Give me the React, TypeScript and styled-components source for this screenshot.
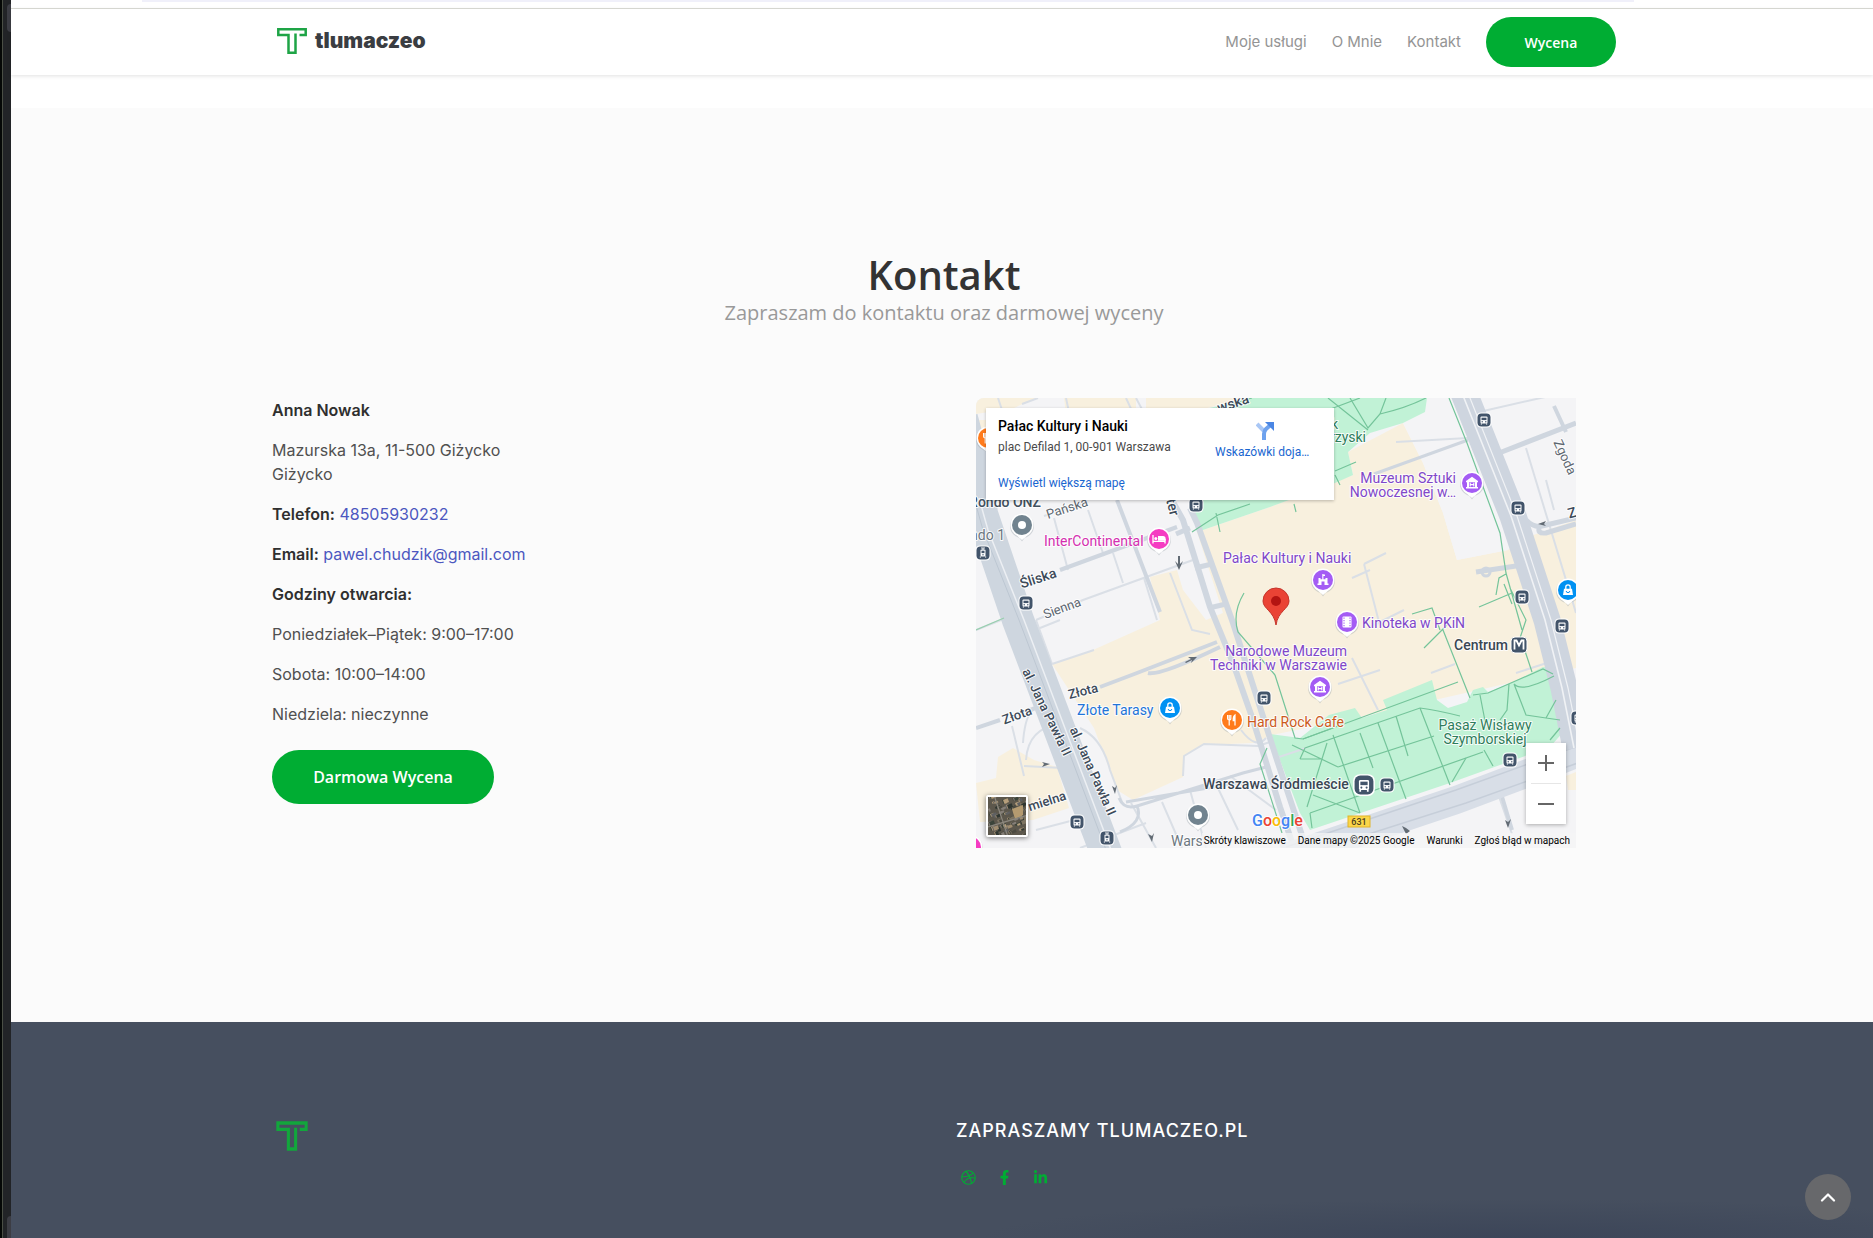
import React from "react";
import styled, { createGlobalStyle } from "styled-components";
import { FaDribbble, FaFacebookF, FaLinkedinIn } from "react-icons/fa";

const GREEN = "#00ad33";
const SANS = `Inter, "Liberation Sans", sans-serif`;
const DISPLAY = `"Open Sans", "Noto Sans", sans-serif`;
const MAP_FONT = `Roboto, "Liberation Sans", sans-serif`;

const Global = createGlobalStyle`
  *, *::before, *::after { box-sizing: border-box; }
  body { margin: 0; background: #fff; font-family: ${SANS}; }
  h1, h2, h3, p, ul { margin: 0; padding: 0; }
  a { text-decoration: none; color: inherit; }
`;

/* ---------- frame ---------- */

const Shell = styled.div`
  display: flex;
  min-height: 100vh;
`;

const Rail = styled.div`
  flex: 0 0 11px;
  display: flex;
  flex-direction: column;
  justify-content: space-between;
  align-items: flex-end;
  padding: 4px 0 0;
  background: linear-gradient(90deg, #050806 2px, #4a4f45 2px, #4a4f45 3px, #222427 3px);
`;

const RailCorner = styled.span<{ $bottom?: boolean }>`
  width: 4px;
  height: ${(p) => (p.$bottom ? 22 : 28)}px;
  background: #3c3d44;
  border-radius: ${(p) => (p.$bottom ? "4px 0 0 0" : "4px 0 0 4px")};
`;

const Page = styled.div`
  flex: 1;
  min-width: 0;
  display: flex;
  flex-direction: column;
`;

const TopStrip = styled.div`
  height: 9px;
  padding: 0 239px 0 131px;
  border-bottom: 1px solid #dcddd6;
  &::before {
    content: "";
    display: block;
    height: 2px;
    background: #f0f0fa;
  }
`;

const Container = styled.div`
  width: 100%;
  max-width: 1348px;
  margin: 0 auto;
  padding-left: 4px;
`;

/* ---------- header ---------- */

const Header = styled.header`
  background: #fff;
  box-shadow: 0 1px 4px rgba(0, 0, 0, 0.12);
`;

const HeaderRow = styled(Container)`
  display: flex;
  align-items: center;
  justify-content: space-between;
  height: 66px;
`;

const Brand = styled.a`
  display: flex;
  align-items: center;
  gap: 8px;
  padding: 0 0 2px 5px;
  color: #3a3d42;
  font-size: 21px;
  line-height: 24px;
  font-weight: 900;
`;

const Nav = styled.nav`
  display: flex;
  align-items: center;
  gap: 25px;
`;

const NavLink = styled.a`
  color: #949494;
  font-size: 15px;
  line-height: 24px;
`;

const Pill = styled.button<{ $large?: boolean }>`
  width: ${(p) => (p.$large ? 222 : 130)}px;
  height: ${(p) => (p.$large ? 54 : 50)}px;
  border: 0;
  border-radius: 27px;
  background: ${GREEN};
  color: #fff;
  font-family: ${DISPLAY};
  font-size: ${(p) => (p.$large ? 16 : 14)}px;
  font-weight: 600;
  cursor: pointer;
`;

/* ---------- contact ---------- */

const Contact = styled.section`
  margin-top: 33px;
  padding: 143px 0 174px;
  background: #fbfbfb;
`;

const Title = styled.h2`
  color: #333;
  font-family: ${DISPLAY};
  font-size: 40px;
  line-height: 48px;
  font-weight: 600;
  text-align: center;
`;

const Subtitle = styled.p`
  margin-bottom: 71px;
  color: #999;
  font-family: ${DISPLAY};
  font-size: 20px;
  line-height: 28px;
  text-align: center;
`;

const Columns = styled.div`
  display: grid;
  grid-template-columns: 1fr 1fr;
  column-gap: 24px;
  align-items: start;
`;

const Details = styled.div`
  color: #505050;
  font-size: 16px;
  line-height: 24px;
`;

const Line = styled.p`
  margin-bottom: 16px;
  strong { color: #2f2f2f; font-weight: 600; }
  a { color: #4c57c0; }
  &:last-of-type { margin-bottom: 24px; }
`;

/* ---------- map ---------- */

const MapFrame = styled.div`
  position: relative;
  height: 450px;
  max-width: 600px;
  margin-left: 20px;
  width: 100%;
  overflow: hidden;
  border-radius: 8px 0 0 0;
  font-family: ${MAP_FONT};
  background: #f3f3f5;
  > svg { display: block; }
`;

const PlaceCard = styled.div`
  position: absolute;
  top: 10px;
  left: 10px;
  width: 348px;
  height: 92px;
  display: flex;
  justify-content: space-between;
  padding: 10px 19px 6px 12px;
  background: #fff;
  box-shadow: 0 1px 3px rgba(0, 0, 0, 0.25);
`;

const PlaceInfo = styled.div`
  display: flex;
  flex-direction: column;
  color: #4a4a4a;
  font-size: 12px;
  line-height: 16px;
  h3 { color: #000; font-size: 14px; line-height: 16px; font-weight: 500; margin-bottom: 5px; }
  a { color: #1a66d0; margin-top: 20px; }
`;

const Directions = styled.a`
  display: flex;
  flex-direction: column;
  align-items: center;
  gap: 4px;
  width: 100px;
  padding-top: 4px;
  color: #1a66d0;
  font-size: 12px;
  line-height: 16px;
  span { align-self: flex-start; }
`;

const ZoomControl = styled.div`
  position: absolute;
  right: 10px;
  top: 345px;
  display: flex;
  flex-direction: column;
  align-items: center;
  background: #fff;
  box-shadow: 0 1px 4px rgba(0, 0, 0, 0.3);
  button {
    width: 40px;
    height: 40px;
    padding: 0;
    border: 0;
    background: none;
    display: grid;
    place-items: center;
    cursor: pointer;
  }
  hr { width: 30px; height: 1px; margin: 0; border: 0; background: #e6e6e6; }
`;

const SatelliteToggle = styled.button`
  position: absolute;
  left: 10px;
  top: 397px;
  width: 42px;
  height: 42px;
  padding: 0;
  border: 2px solid #fff;
  border-radius: 2px;
  box-shadow: 0 1px 5px rgba(0, 0, 0, 0.5);
  cursor: pointer;
  svg { display: block; }
`;

const Attribution = styled.div`
  position: absolute;
  right: 0;
  bottom: 0;
  display: flex;
  gap: 12px;
  padding: 0 6px 0 2px;
  background: rgba(245, 245, 245, 0.75);
  color: #000;
  font-size: 10px;
  line-height: 15px;
  white-space: nowrap;
`;

const MapButton = styled.button`
  padding: 0;
  border: 0;
  background: none;
  color: inherit;
  font: inherit;
`;

type P = { x: number; y: number };

const Transit = ({ x, y, tram }: P & { tram?: boolean }) => (
  <g transform={`translate(${x} ${y})`}>
    <rect x="-7.5" y="-7.5" width="15" height="15" rx="4.5" fill="#fff" />
    <rect x="-6.5" y="-6.5" width="13" height="13" rx="4" fill="#42546a" />
    <rect x={tram ? -2.5 : -3.5} y="-3.5" width={tram ? 5 : 7} height="7" rx="1" fill="#fff" />
    <rect x={tram ? -1.5 : -2.5} y="-2.3" width={tram ? 3 : 5} height="2.4" fill="#42546a" />
    <circle cx={tram ? 0 : -1.8} cy="1.8" r=".7" fill="#42546a" />
    {!tram && <circle cx="1.8" cy="1.8" r=".7" fill="#42546a" />}
    {tram && <path d="M-2-5H2M0-5V-3" stroke="#fff" strokeWidth=".9" />}
    <path d="M-2.6 3.5V4.6M2.6 3.5V4.6" stroke="#fff" strokeWidth="1.2" />
  </g>
);

type Glyph = "dot" | "bed" | "museum" | "palace" | "film" | "bag" | "food";

const glyphs: Record<Glyph, React.ReactNode> = {
  dot: <circle r="4" fill="#fff" />,
  bed: (
    <g>
      <path d="M-6-4V4.5M-6 2.400H6M6 4.5V0" fill="none" stroke="#fff" strokeWidth="1.3" />
      <path d="M-1 1.800V-3H4Q6.600-3 6.600-.5V1.800Z" fill="#fff" />
      <circle cx="-3.200" cy="-.6" r="1.500" fill="#fff" />
    </g>
  ),
  museum: (
    <g fill="#fff">
      <path d="M-6-2 0-6.2 6-2V-.8H-6Z" />
      <path d="M-5-1H-3V4H-5ZM3-1H5V4H3ZM-6 4H6V5.4H-6Z" />
      <path d="M-1.8-.2V3.6M1.8-.2V3.6M-1.8 1.6H1.8" stroke="#fff" strokeWidth="1.1" />
    </g>
  ),
  palace: <path d="M-5.500 5V3.500H-4.500V-2H-2.500V-.8H-.7V-6H.4V-5.500H2V-4H.4V-.8H2.500V-2H4.500V3.500H5.500V5H1.500V1.500H-1.500V5Z" fill="#fff" />,
  film: (
    <g>
      <rect x="-4.5" y="-5.5" width="9" height="11" rx="1" fill="#fff" />
      <path d="M-3-4.5V4.5M3-4.5V4.5" stroke="#a45cf4" strokeWidth="1.1" strokeDasharray="1.3 1.2" />
    </g>
  ),
  bag: (
    <g>
      <path d="M-4-1.2H4L5 5H-5Z" fill="#fff" />
      <path d="M-2.2-.8V-3A2.2 2.2 0 0 1 2.2-3V-.8" fill="none" stroke="#fff" strokeWidth="1.3" />
      <path d="M-1.8 1A1.8 1.6 0 0 0 1.8 1" fill="none" stroke="#0091f2" strokeWidth="1" />
    </g>
  ),
  food: (
    <g stroke="#fff" fill="none" strokeWidth="1.2">
      <path d="M-4.4-5V-1.5Q-4.4 0-2.8 0T-1.2-1.5V-5M-2.8-5V5.5" />
      <path d="M3 5.5V-5Q1-3.5 1.2.6H3" fill="#fff" />
    </g>
  ),
};

const Pin = ({ x, y, color, glyph }: P & { color: string; glyph: Glyph }) => (
  <g transform={`translate(${x} ${y})`}>
    <path d="M-4 10 0 15.5 4 10Z M0-12A12 12 0 1 1 0 12 12 12 0 0 1 0-12Z" fill="#8b97a0" opacity=".35" transform="translate(0 1)" />
    <path d="M-7 9 0 15 7 9Z" fill="#fff" />
    <circle r="11.5" fill="#fff" />
    <circle r="10" fill={color} />
    {glyphs[glyph]}
  </g>
);

const Label = styled.text<{ $bold?: boolean; $size?: number }>`
  font-family: ${MAP_FONT};
  font-size: ${(p) => p.$size ?? 14}px;
  font-weight: ${(p) => (p.$bold ? 500 : 400)};
  paint-order: stroke;
  stroke: rgba(255, 255, 255, 0.85);
  stroke-width: 2px;
  stroke-linejoin: round;
`;

const Street = ({ x, y, r, bold, size, children }: P & { r: number; bold?: boolean; size?: number; children: string }) => (
  <Label
    $bold={bold}
    $size={size}
    fill={bold ? "#3c4a59" : "#5c6670"}
    textAnchor="middle"
    dominantBaseline="central"
    transform={`translate(${x} ${y}) rotate(${r})`}
  >
    {children}
  </Label>
);

const MapDrawing = () => (
  <svg width="600" height="450" viewBox="0 0 600 450" role="img" aria-label="Mapa">
    <rect width="600" height="450" fill="#f4f4f6" />
    {/* built-up areas */}
    <g fill="#f8f0de">
      <path d="M0 0H60L38 10 0 16ZM88 0H160V16H90ZM170 0H270L216 14H170ZM0 22H14V75H0Z" />
      <path d="M0 0M451 15 427 25 372 54 377 77 294 109 221 134 247 215 230 222 207 192 201 172 174 179 184 222 117 252 76 266 118 330 141 392 157 402 207 379 207 359 227 347 277 345 296 337 379 320 600 270 600 122 549 140 532 152 481 162 467 115 447 65 427 25Z" />
      <path d="M22 359 37 350 58 362 81 369 93 410 57 422 4 424 0 385 20 380Z" />
      <path d="M590 378 600 374V392H592Z" />
    </g>
    <path d="M451 15 476 0 494 49 524 135 532 152 481 162 467 115 447 65 427 25Z" fill="#f4f4f6" />
    {/* parks */}
    <g fill="#c1f2d6">
      <path d="M216 14 277 0H451L449 14 427 25 394 35 372 54 377 77 359 85 294 109 221 134 216 100Z" />
      <path d="M294 336 324 340 353 317 379 310 386 320 411 312 407 302 456 282 461 302 472 310 491 304 497 292 507 289 512 294 537 284 567 269 577 270 581 305 589 332 574 349 474 385 334 432 324 415Z" />
    </g>
    {/* minor streets */}
    <g fill="none" stroke="#dadfe6" strokeWidth="2">
      <path d="M22 0 26 12M90 0 93 14M150 0 164 30M160 0 176 30M46 6 62 0" />
      <path d="M112 112 128 158M78 120 92 172M68 118 112 104M137 155 147 185M60 222 107 202 217 162M0 232 30 220" />
      <path d="M181 222 168 180M60 222 76 266M76 266 118 252M64 230 84 222" />
      <path d="M194 175 216 232 234 236M36 328 48 378M47 345Q50 300 72 312M50 362Q52 330 84 326M48 368 86 370" />
      <path d="M155 405 180 450M186 404 206 450M214 392 230 450M240 386 262 432M254 378 300 412M207 378 208 358 228 346 282 348 294 344" />
      <path d="M520 390 536 436M412 436 420 450M420 44 492 40M550 50 600 215M570 82 578 112M503 14 600 -8" />
      <path d="M362 286 404 272M376 260 402 312M455 275 479 266M540 275 580 262M388 166 410 155M388 166 404 228M392 230 428 212M376 180 394 172" />
      <path d="M104 330Q126 340 134 372L146 404M300 360 330 350M265 332Q280 352 290 340" />
      <path d="M104 450 170 425M60 432 106 420" />
    </g>
    <g fill="none" stroke="#cfd6df" strokeWidth="4">
      <path d="M141 102 184 214M84 172 201 129M578 8 590 34M524 392 536 432" />
      <path d="M124 289 161 275 241 244M172 275Q184 278 244 249M0 330 24 322M54 312 76 304" />
      <path d="M143 400Q148 412 161 408L267 375 294 368M150 404 267 384M161 408Q168 424 144 434M398 76 492 42" strokeWidth="3" />
      <path d="M518 57 600 25M550 122Q558 130 566 128L600 120M564 128Q560 136 570 135L600 126M500 174 540 168" strokeWidth="5" />
      <circle cx="510" cy="174" r="4" strokeWidth="3" />
    </g>
    <g fill="none" stroke="#d0d7e0" strokeWidth="6">
      <path d="M192 95 207 122 234 209 257 265 277 322 304 409 318 450" />
      <path d="M214 110 221 125 257 225 301 362 321 422 330 450" />
      <path d="M200 136 214 130M219 170 236 166M233 210 250 206" strokeWidth="5" />
    </g>
    {/* main avenues */}
    <g fill="none">
      <path d="M-14 20 2 80 6 116 42 222 134 465" stroke="#ced6df" strokeWidth="32" />
      <path d="M3 100 12 132 48 222 140 465" stroke="#eceff3" strokeWidth="1.5" />
      <path d="M-2 100 7 132 43 222 135 465" stroke="#bdc7d2" strokeWidth="1" />
      <path d="M308 460 480 402 560 372 610 352" stroke="#d8dee7" strokeWidth="28" />
      <path d="M310 449 480 392 610 345M330 456 490 405 610 362" stroke="#c6ced9" strokeWidth="1.5" />
      <path d="M488 -5 537 118 571 222 588 290 600 350" stroke="#ced5df" strokeWidth="27" />
      <path d="M486 -5 535 118 569 222 586 290 598 350" stroke="#f0f2f5" strokeWidth="1.6" />
      <path d="M492 -5 541 118 575 222 592 290 604 350" stroke="#f0f2f5" strokeWidth="1.2" />
    </g>
    {/* footpaths */}
    <g fill="none" stroke="#74c49a" strokeWidth="1.2">
      <path d="M218 17 276 0M336 18 384 0M352 0 392 32M374 0 392 30 404 16 410 0M404 16Q430 10 450 0M359 73 380 64M359 77 364 87M320 114 318 106M216 134 242 117 274 106M240 115 244 134" />
      <path d="M473 0 491 45 524 135 530 175 546 232M520 197 523 180 530 176M503 209 536 195M528 186 536 206M534 190 550 222 544 240M268 195Q256 215 262 234L299 277M299 277 319 340 327 341 482 284" />
      <path d="M448 250 472 226M467 232 494 300M436 216 456 210 464 232M548 250 556 274" />
      <path d="M324 361 329 350 444 310Q460 312 484 318M357 337 384 415M384 335 397 370M402 325 430 401M420 318 432 358M444 310 474 387M316 347 362 369M362 369 458 338M334 415 507 354M337 397 384 415M351 345 331 409M324 361 345 361M334 415 336 430M327 341 357 330" />
      <path d="M497 297 512 295 567 271 577 276M504 297 510 328M533 286 531 312 524 322M538 286 550 317 570 320 584 322M538 286Q546 295 578 278M570 320 580 302M476 384 490 360M508 352 517 368M574 342 584 330M291 350 284 366 306 435" />
      <path d="M0 232 28 220" stroke="#97cfae" />
    </g>
    <g fill="#626b74">
      <path d="M202 158H204V166L207 163 203 172 199 163 202 166Z" />
      <path d="M221 259 212 259 215 261 209 264 210 265 216 262 215 265ZM562 126l8-3-2 3 2 2ZM74 366l-8-2 2 2-2 3ZM139 396l-3-8 3 2 2-3ZM176 444l-4-8 4 2 2-3ZM532 430l-3-8 3 2 3-3ZM430 436l-4-8 4 2 4 3Z" />
    </g>

    {/* street names */}
    <Street x={257} y={5} r={-18} bold>wska</Street>
    <Street x={91} y={110} r={-18} size={13}>Pańska</Street>
    <Street x={62} y={180} r={-18} bold>Śliska</Street>
    <Street x={86} y={210} r={-20} size={13}>Sienna</Street>
    <Street x={197} y={109} r={75} bold>ter</Street>
    <Street x={107} y={293} r={-14} bold size={13}>Złota</Street>
    <Street x={41} y={317} r={-20} bold size={13}>Złota</Street>
    <Street x={71} y={314} r={64} bold size={13}>al. Jana Pawła II</Street>
    <Street x={117} y={373} r={66} bold size={13}>al. Jana Pawła II</Street>
    <Street x={71} y={403} r={-18} bold size={13}>mielna</Street>
    <Street x={589} y={59} r={65} size={13}>Zgoda</Street>
    <Street x={598} y={114} r={-15} bold>Zł</Street>
    <Label x="65" y="109" textAnchor="end" fill="#42505e" $bold>Rondo ONZ</Label>
    <Label x="29" y="142" textAnchor="end" fill="#6b7680">ndo 1</Label>
    <Label x="195" y="448" fill="#6b7680">Wars</Label>

    {/* transit */}
    <Transit x={7} y={155} tram />
    <Transit x={50} y={205} />
    <Transit x={220} y={107} />
    <Transit x={508} y={22} />
    <Transit x={542} y={110} />
    <Transit x={546} y={199} />
    <Transit x={586} y={228} />
    <Transit x={288} y={300} />
    <Transit x={101} y={424} />
    <Transit x={131} y={440} tram />
    <Transit x={411} y={387} />
    <Transit x={534} y={362} />
    <Transit x={602} y={320} />
    <g transform="translate(388 387) scale(1.45)"><Transit x={0} y={0} /></g>
    <g>
      <rect x="535" y="239" width="16" height="16" rx="4" fill="#42546a" stroke="#fff" />
      <path d="M538.500 251.500V242.500H540.500L543 247.500 545.500 242.500H547.500V251.500" fill="none" stroke="#fff" strokeWidth="1.8" />
    </g>

    {/* places */}
    <Pin x={12} y={40} color="#ff7b1c" glyph="food" />
    <Pin x={46} y={127} color="#71838f" glyph="dot" />
    <Pin x={183} y={141} color="#f53cc2" glyph="bed" />
    <Pin x={496} y={85} color="#a45cf4" glyph="museum" />
    <Pin x={347} y={182} color="#a45cf4" glyph="palace" />
    <Pin x={371} y={224} color="#a45cf4" glyph="film" />
    <Pin x={344} y={289} color="#a45cf4" glyph="museum" />
    <Pin x={592} y={192} color="#0091f2" glyph="bag" />
    <Pin x={194} y={310} color="#0091f2" glyph="bag" />
    <Pin x={256} y={322} color="#ff7b1c" glyph="food" />
    <Pin x={222} y={417} color="#71838f" glyph="dot" />
    <Pin x={-5} y={449} color="#f53cc2" glyph="dot" />

    <Label x="68" y="148" fill="#d42fb0">InterContinental</Label>
    <g fill="#2e7d5b">
      <Label x="362" y="31" textAnchor="end">Park</Label>
      <Label x="390" y="44" textAnchor="end">Świętokrzyski</Label>
      <Label x="509" y="332" textAnchor="middle">Pasaż Wisławy</Label>
      <Label x="509" y="346" textAnchor="middle">Szymborskiej</Label>
    </g>
    <g fill="#8047c9">
      <Label x="480" y="85" textAnchor="end">Muzeum Sztuki</Label>
      <Label x="480" y="99" textAnchor="end">Nowoczesnej w…</Label>
      <Label x="247" y="165">Pałac Kultury i Nauki</Label>
      <Label x="386" y="230">Kinoteka w PKiN</Label>
      <Label x="371" y="258" textAnchor="end">Narodowe Muzeum</Label>
      <Label x="371" y="272" textAnchor="end">Techniki w Warszawie</Label>
    </g>
    <Label x="101" y="317" fill="#2274d8">Złote Tarasy</Label>
    <Label x="271" y="329" fill="#cc5a1c">Hard Rock Cafe</Label>
    <Label x="227" y="391" fill="#3a4653" $bold>Warszawa Śródmieście</Label>
    <Label x="478" y="252" fill="#3a4653" $bold>Centrum</Label>

    <rect x="372" y="418" width="22" height="11" fill="#fbd649" stroke="#e0b32a" />
    <text x="383" y="427" textAnchor="middle" fontSize="9" fontWeight="500" fill="#4a4020" fontFamily="Roboto, sans-serif">631</text>

    {/* selected place */}
    <path d="M300 227C298 213 287 211 287 203A13 13 0 0 1 313 203C313 211 302 213 300 227Z" fill="#ea4335" stroke="#c5352b" strokeWidth="1" />
    <circle cx="300" cy="203" r="5" fill="#b31412" />

    <Label x="276" y="428" $bold $size={16}>
      <tspan fill="#4285f4">G</tspan>
      <tspan fill="#ea4335">o</tspan>
      <tspan fill="#fbbc05">o</tspan>
      <tspan fill="#4285f4">g</tspan>
      <tspan fill="#34a853">l</tspan>
      <tspan fill="#ea4335">e</tspan>
    </Label>
  </svg>
);

const SatelliteThumb = () => {
  const tones = ["#4b4a41", "#7d7462", "#2f3631", "#a08d70", "#5f6062", "#b59e7b", "#3b443a", "#857f78"];
  const cells: React.ReactNode[] = [];
  for (let i = 0; i < 110; i++) {
    const x = (i * 17) % 38;
    const y = (i * 29 + Math.floor(i / 7) * 5) % 38;
    cells.push(
      <rect key={i} x={x} y={y} width={2 + (i % 4)} height={2 + (i % 3)} fill={tones[(i * 5 + (i >> 2)) % 8]} transform={`rotate(-20 ${x} ${y})`} />
    );
  }
  return (
    <svg width="38" height="38" viewBox="0 0 38 38" aria-hidden="true">
      <rect width="38" height="38" fill="#5c574c" />
      {cells}
      <path d="M24 12 35 8V18L27 22Z" fill="#b49a70" />
      <path d="M6-2 20 40M0 30 40 18" stroke="#8b877e" strokeWidth="1.200" />
    </svg>
  );
};

const MapWidget = () => (
  <MapFrame>
    <MapDrawing />
    <PlaceCard>
      <PlaceInfo>
        <h3>Pałac Kultury i Nauki</h3>
        <span>plac Defilad 1, 00-901 Warszawa</span>
        <a href="#mapa">Wyświetl większą mapę</a>
      </PlaceInfo>
      <Directions href="#dojazd">
        <svg width="18" height="18" viewBox="0 0 18 18" aria-hidden="true">
          <path d="M1 2 8 9" stroke="#a9c7f5" strokeWidth="4" />
          <path d="M8 18V12Q8 9 10 7L14 3.500" fill="none" stroke="#6ea2ee" strokeWidth="4" />
          <path d="M9 0H18V9Z" fill="#4a86e4" />
        </svg>
        <span>Wskazówki doja…</span>
      </Directions>
    </PlaceCard>
    <SatelliteToggle aria-label="Pokaż zdjęcia satelitarne">
      <SatelliteThumb />
    </SatelliteToggle>
    <ZoomControl>
      <button aria-label="Powiększ">
        <svg width="18" height="18" viewBox="0 0 18 18"><path d="M1 9H17M9 1V17" stroke="#666" strokeWidth="2" /></svg>
      </button>
      <hr />
      <button aria-label="Pomniejsz">
        <svg width="18" height="18" viewBox="0 0 18 18"><path d="M1 9H17" stroke="#666" strokeWidth="2" /></svg>
      </button>
    </ZoomControl>
    <Attribution>
      <MapButton>Skróty klawiszowe</MapButton>
      <span>Dane mapy ©2025 Google</span>
      <a href="#warunki">Warunki</a>
      <a href="#blad">Zgłoś błąd w mapach</a>
    </Attribution>
  </MapFrame>
);

/* ---------- footer ---------- */

const Footer = styled.footer`
  flex: 1;
  padding: 98px 0 40px;
  background: radial-gradient(ellipse at 60% 100%, rgba(50, 60, 82, 0.5), transparent 70%) right bottom / 900px 40px no-repeat, #464f5f;
`;

const FooterLogo = styled.a`
  display: block;
  padding: 1px 0 0 4px;
`;

const FooterTitle = styled.h3`
  color: #fff;
  font-size: 18px;
  line-height: 22px;
  font-weight: 500;
  letter-spacing: 1px;
`;

const Social = styled.div`
  display: flex;
  gap: 12px;
  margin-top: 23px;
  a {
    display: grid;
    place-items: center;
    width: 24px;
    height: 24px;
    color: ${GREEN};
    font-size: 15px;
  }
`;

const ToTop = styled.button`
  position: fixed;
  right: 22px;
  bottom: 18px;
  width: 46px;
  height: 46px;
  padding: 0;
  border: 0;
  border-radius: 50%;
  background: #67686b;
  display: grid;
  place-items: center;
  cursor: pointer;
`;

const LogoMark = ({ heavy }: { heavy?: boolean }) => (
  <svg width={heavy ? 32 : 30} height={heavy ? 30 : 26} viewBox={heavy ? "-0.500 -0.500 31 27" : "0 0 30 26"} preserveAspectRatio="none" aria-hidden="true">
    <path
      d="M22.500 7H28.700V1.300H1.300V7H11.500V24.700H18.500V5.500"
      fill="none"
      stroke={heavy ? "#12a63c" : "#1ea446"}
      strokeWidth={heavy ? 3 : 2.5}
    />
  </svg>
);

export default function App() {
  return (
    <Shell>
      <Global />
      <Rail>
        <RailCorner />
        <RailCorner $bottom />
      </Rail>
      <Page>
        <TopStrip />
        <Header>
          <HeaderRow>
            <Brand href="#start">
              <LogoMark />
              tlumaczeo
            </Brand>
            <Nav>
              <NavLink href="#uslugi">Moje usługi</NavLink>
              <NavLink href="#o-mnie">O Mnie</NavLink>
              <NavLink href="#kontakt">Kontakt</NavLink>
              <Pill>Wycena</Pill>
            </Nav>
          </HeaderRow>
        </Header>
        <Contact id="kontakt">
          <Container>
            <Title>Kontakt</Title>
            <Subtitle>Zapraszam do kontaktu oraz darmowej wyceny</Subtitle>
            <Columns>
              <Details>
                <Line><strong>Anna Nowak</strong></Line>
                <Line>Mazurska 13a, 11-500 Giżycko<br />Giżycko</Line>
                <Line><strong>Telefon:</strong> <a href="tel:48505930232">48505930232</a></Line>
                <Line><strong>Email:</strong> <a href="mailto:pawel.chudzik@gmail.com">pawel.chudzik@gmail.com</a></Line>
                <Line><strong>Godziny otwarcia:</strong></Line>
                <Line>Poniedziałek–Piątek: 9:00–17:00</Line>
                <Line>Sobota: 10:00–14:00</Line>
                <Line>Niedziela: nieczynne</Line>
                <Pill $large>Darmowa Wycena</Pill>
              </Details>
              <MapWidget />
            </Columns>
          </Container>
        </Contact>
        <Footer>
          <Container>
            <Columns>
              <FooterLogo href="#start" aria-label="tlumaczeo"><LogoMark heavy /></FooterLogo>
              <div>
                <FooterTitle>ZAPRASZAMY TLUMACZEO.PL</FooterTitle>
                <Social>
                  <a href="#dribbble" aria-label="Dribbble"><FaDribbble /></a>
                  <a href="#facebook" aria-label="Facebook"><FaFacebookF /></a>
                  <a href="#linkedin" aria-label="LinkedIn"><FaLinkedinIn /></a>
                </Social>
              </div>
            </Columns>
          </Container>
        </Footer>
      </Page>
      <ToTop aria-label="Do góry">
        <svg width="16" height="10" viewBox="0 0 16 10"><path d="M2 8.500 8 2.500 14 8.500" fill="none" stroke="#fff" strokeWidth="2.200" strokeLinecap="round" strokeLinejoin="round" /></svg>
      </ToTop>
    </Shell>
  );
}
